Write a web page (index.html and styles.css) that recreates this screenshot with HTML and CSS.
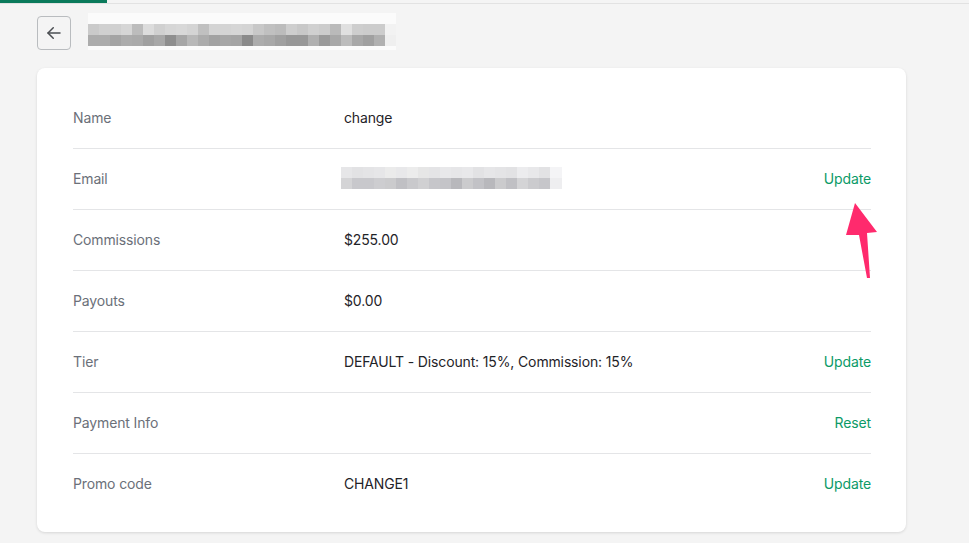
FILE: index.html
```html
<!DOCTYPE html>
<html lang="en">
<head>
    <meta charset="UTF-8">
    <meta name="viewport" content="width=device-width, initial-scale=1.0">
    <title>Affiliate details</title>
    <link rel="stylesheet" href="styles.css">
</head>
<body>
    <div class="progress"><div class="progress-bar"></div></div>

    <div class="page">
        <div class="page-header">
            <button class="back-button" aria-label="Back">
                <svg width="18" height="18" viewBox="0 0 24 24" fill="none" stroke="currentColor" stroke-width="2" stroke-linecap="round" stroke-linejoin="round">
                    <line x1="20" y1="12" x2="4" y2="12"></line>
                    <polyline points="11 5 4 12 11 19"></polyline>
                </svg>
            </button>
            <div class="redacted redacted-title"></div>
        </div>

        <div class="card">
            <div class="detail-row">
                <div class="detail-label">Name</div>
                <div class="detail-value">change</div>
                <div class="detail-action"></div>
            </div>
            <div class="detail-row">
                <div class="detail-label">Email</div>
                <div class="detail-value"><div class="redacted redacted-email"></div></div>
                <div class="detail-action"><a href="#">Update</a></div>
            </div>
            <div class="detail-row">
                <div class="detail-label">Commissions</div>
                <div class="detail-value">$255.00</div>
                <div class="detail-action"></div>
            </div>
            <div class="detail-row">
                <div class="detail-label">Payouts</div>
                <div class="detail-value">$0.00</div>
                <div class="detail-action"></div>
            </div>
            <div class="detail-row">
                <div class="detail-label">Tier</div>
                <div class="detail-value">DEFAULT - Discount: 15%, Commission: 15%</div>
                <div class="detail-action"><a href="#">Update</a></div>
            </div>
            <div class="detail-row">
                <div class="detail-label">Payment Info</div>
                <div class="detail-value"></div>
                <div class="detail-action"><a href="#">Reset</a></div>
            </div>
            <div class="detail-row">
                <div class="detail-label">Promo code</div>
                <div class="detail-value">CHANGE1</div>
                <div class="detail-action"><a href="#">Update</a></div>
            </div>
        </div>
    </div>

    <!-- callout arrow pointing at the email update link -->
    <svg class="callout-arrow" width="40" height="80" viewBox="0 0 40 80">
        <polygon points="10,1 32,30 22,31 25,76 22,76 14,33 1,33" fill="#ff2a6d"></polygon>
    </svg>
</body>
</html>
```

FILE: styles.css
```css
* {
    margin: 0;
    padding: 0;
    box-sizing: border-box;
}

body {
    background-color: #f4f4f4;
    font-family: Inter, "Noto Sans", Arial, sans-serif;
    font-size: 14px;
    letter-spacing: -0.01em;
    color: #1f2328;
    min-height: 100vh;
    position: relative;
}

.progress {
    height: 4px;
    border-bottom: 1px solid #e2e2e2;
}

.progress-bar {
    width: 107px;
    height: 3px;
    background: #0a7a5b;
}

.page {
    padding: 0 63px 0 37px;
}

.page-header {
    display: flex;
    align-items: center;
    gap: 17px;
    margin-top: 12px;
}

.back-button {
    width: 34px;
    height: 34px;
    display: flex;
    align-items: center;
    justify-content: center;
    background: transparent;
    border: 1px solid #b9bcbf;
    border-radius: 4px;
    color: #4a4d51;
    cursor: pointer;
}

/* pixelated placeholders */
.redacted {
    position: relative;
}

.redacted-title {
    width: 308px;
    height: 37px;
    margin-top: -4px;
    background:
        linear-gradient(90deg,
            #cacaca 0 11px, #d0d0d0 11px 22px, #d0d0d0 22px 33px, #d6d6d6 33px 44px,
            #bcbcbc 44px 55px, #dcdcdc 55px 66px, #d0d0d0 66px 77px, #d6d6d6 77px 88px,
            #d8d8d8 88px 99px, #d4d4d4 99px 110px, #c0c0c0 110px 121px, #d4d4d4 121px 132px,
            #d4d4d4 132px 143px, #d6d6d6 143px 154px, #d4d4d4 154px 165px, #c8c8c8 165px 176px,
            #c0c0c0 176px 187px, #bcbcbc 187px 198px, #cecece 198px 209px, #c8c8c8 209px 220px,
            #d0d0d0 220px 231px, #cccccc 231px 242px, #bababa 242px 253px, #e0e0e0 253px 264px,
            #cecece 264px 275px, #cccccc 275px 286px, #cccccc 286px 297px, #f2f2f2 297px 308px)
            0 11px / 100% 11px no-repeat,
        linear-gradient(90deg,
            #acacac 0 11px, #acacac 11px 22px, #a4a4a4 22px 33px, #acacac 33px 44px,
            #aaaaaa 44px 55px, #a0a0a0 55px 66px, #a8a8a8 66px 77px, #8e8e8e 77px 88px,
            #a6a6a6 88px 99px, #b8b8b8 99px 110px, #acacac 110px 121px, #a2a2a2 121px 132px,
            #a6a6a6 132px 143px, #a4a4a4 143px 154px, #8a8a8a 154px 165px, #acacac 165px 176px,
            #a8a8a8 176px 187px, #a0a0a0 187px 198px, #989898 198px 209px, #989898 209px 220px,
            #b0b0b0 220px 231px, #9a9a9a 231px 242px, #a8a8a8 242px 253px, #bcbcbc 253px 264px,
            #a8a8a8 264px 275px, #a0a0a0 275px 286px, #b0b0b0 286px 297px, #efefef 297px 308px)
            0 22px / 100% 11px no-repeat,
        #fbfbfb;
}

.redacted-email {
    width: 221px;
    height: 22px;
    margin-left: -3px;
    background:
        linear-gradient(90deg,
            #e6e6e8 0 11px, #e2e2e4 11px 22px, #e4e4e6 22px 33px, #e6e6e8 33px 44px,
            #ebebeb 44px 55px, #e8e8ea 55px 66px, #ececec 66px 77px, #e6e6e6 77px 88px,
            #e4e4e6 88px 99px, #e8e8ea 99px 110px, #e6e6e8 110px 121px, #e8e8ea 121px 132px,
            #e2e2e4 132px 143px, #e6e6e8 143px 154px, #e4e4e6 154px 165px, #e2e2e4 165px 176px,
            #ececee 176px 187px, #e8e8ea 187px 198px, #e2e2e4 198px 209px, #f4f4f6 209px 221px)
            0 0 / 100% 11px no-repeat,
        linear-gradient(90deg,
            #d4d4d6 0 11px, #c8c8cc 11px 22px, #c8c8cc 22px 33px, #cdcdd0 33px 44px,
            #cbcbcd 44px 55px, #c0c0c4 55px 66px, #c9c9cc 66px 77px, #d0d0d2 77px 88px,
            #c6c6ca 88px 99px, #c4c4c8 99px 110px, #b8b8bc 110px 121px, #cbcbcd 121px 132px,
            #c2c2c6 132px 143px, #b8b8bc 143px 154px, #cbcbcd 154px 165px, #c0c0c4 165px 176px,
            #d4d4d6 176px 187px, #cbcbce 187px 198px, #c6c6ca 198px 209px, #eeeef0 209px 221px)
            0 11px / 100% 11px no-repeat;
}

.card {
    margin-top: 18px;
    background: white;
    border-radius: 8px;
    box-shadow: 0 1px 3px rgba(0, 0, 0, 0.12);
    padding: 20px 35px 18px 36px;
}

.detail-row {
    display: grid;
    grid-template-columns: 271px 1fr auto;
    align-items: center;
    height: 61px;
    padding-bottom: 2px;
    border-bottom: 1px solid #e4e5e7;
}

.detail-row:last-child {
    height: 60px;
    border-bottom: none;
}

.detail-label {
    color: #6b7079;
}

.detail-value {
    color: #1f2328;
}

.detail-action a {
    color: #0c9a67;
    text-decoration: none;
}

.callout-arrow {
    position: absolute;
    left: 845px;
    top: 202px;
}
```
